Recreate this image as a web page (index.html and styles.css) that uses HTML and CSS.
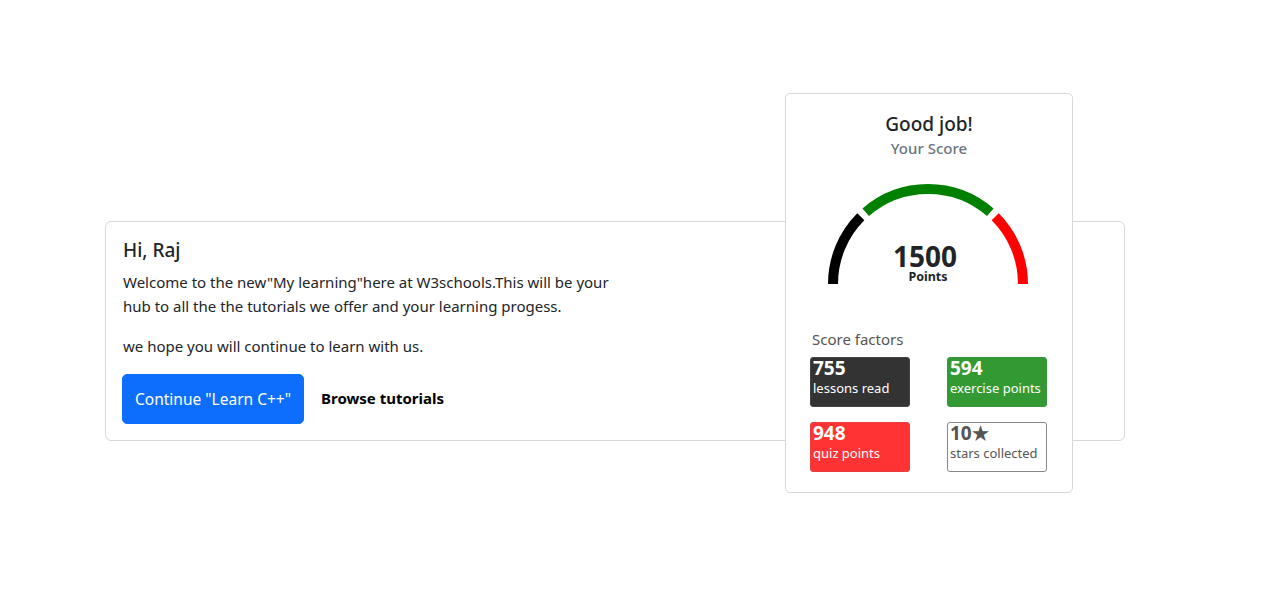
FILE: index.html
```html
<!DOCTYPE html>
<html>
<head>
<meta charset="utf-8">
<link rel="stylesheet" href="styles.css">
</head>
<body>
<div class="page">
  <div class="welcome-card">
    <div class="welcome-text">
      <h5 class="title">Hi, Raj</h5>
      <p>Welcome to the new"My learning"here at W3schools.This will be your hub to all the the tutorials we offer and your learning progess.</p>
      <p>we hope you will continue to learn with us.</p>
      <div class="actions">
        <button class="btn-primary">Continue "Learn C++"</button>
        <a class="browse">Browse tutorials</a>
      </div>
    </div>
  </div>

  <div class="score-card">
    <h5 class="score-title">Good job!</h5>
    <div class="score-sub">Your Score</div>
    <div class="gauge">
      <svg width="200" height="100" viewBox="0 0 200 100">
        <path d="M5 100 A95 95 0 0 1 32.8 32.8" fill="none" stroke="#000" stroke-width="10"/>
        <path d="M37.7 28.3 A95 95 0 0 1 162.3 28.3" fill="none" stroke="#008000" stroke-width="10"/>
        <path d="M167.2 32.8 A95 95 0 0 1 195 100" fill="none" stroke="#ff0000" stroke-width="10"/>
      </svg>
      <div class="gauge-value">
        <div class="points">1500</div>
        <div class="points-label">Points</div>
      </div>
    </div>
    <div class="factors-title">Score factors</div>
    <div class="factors">
      <div class="factor dark"><div class="num">755</div><div class="lbl">lessons read</div></div>
      <div class="factor green"><div class="num">594</div><div class="lbl">exercise points</div></div>
      <div class="factor red"><div class="num">948</div><div class="lbl">quiz points</div></div>
      <div class="factor white"><div class="num">10★</div><div class="lbl">stars collected</div></div>
    </div>
  </div>
</div>
</body>
</html>
```

FILE: styles.css
```css
* { box-sizing: border-box; }
body {
  margin: 0;
  font-family: "Noto Sans", "Open Sans", sans-serif;
  color: #212529;
  background: #fff;
}
.page {
  position: relative;
  width: 1268px;
  height: 603px;
  padding: 221px 0 0 105px;
}
.welcome-card {
  width: 1020px;
  border: 1px solid #d6d8db;
  border-radius: 6px;
  padding: 16px 16px;
}
.welcome-text { width: 500px; padding-left: 1px; }
.title {
  margin: 0 0 8px;
  font-size: 19px;
  font-weight: 500;
  line-height: 24px;
}
.welcome-text p {
  margin: 0 0 16px;
  font-size: 15px;
  line-height: 24px;
}
.actions {
  display: flex;
  align-items: center;
  gap: 17px;
}
.btn-primary {
  background: #0d6efd;
  color: #fff;
  border: 1px solid #0d6efd;
  border-radius: 5px;
  font-family: inherit;
  font-size: 15.5px;
  line-height: 24px;
  padding: 12px 4px;
  width: 182px;
  height: 50px;
  margin-left: -1px;
  white-space: nowrap;
  text-align: center;
}
.browse {
  font-weight: 700;
  font-size: 15px;
  color: #000;
  margin-top: -3px;
}
.score-card {
  position: absolute;
  left: 785px;
  top: 93px;
  width: 288px;
  height: 400px;
  background: #fff;
  border: 1px solid #d6d8db;
  border-radius: 5px;
  padding: 16px 24px 20px;
  display: flex;
  flex-direction: column;
  align-items: center;
}
.score-title {
  margin: 0;
  font-size: 19px;
  font-weight: 500;
  line-height: 28px;
}
.score-sub {
  font-size: 15px;
  color: #6c757d;
  line-height: 22px;
  margin-top: -1px;
  font-weight: 500;
}
.gauge {
  position: relative;
  width: 200px;
  height: 100px;
  margin-top: 25px;
  margin-left: -2px;
}
.gauge svg { display: block; }
.gauge-value {
  position: absolute;
  left: 0;
  right: 0;
  top: 59px;
  text-align: center;
}
.points {
  font-size: 28px;
  font-weight: 700;
  line-height: 26px;
  margin-left: -6px;
}
.points-label {
  font-size: 12.5px;
  font-weight: 700;
  line-height: 14px;
  margin-top: 1px;
}
.factors-title {
  align-self: flex-start;
  margin: 45px 0 0 2px;
  font-size: 15px;
  color: #555;
  line-height: 20px;
}
.factors {
  align-self: flex-start;
  margin-top: 8px;
  display: grid;
  grid-template-columns: 100px 100px;
  column-gap: 37px;
  row-gap: 15px;
}
.factor {
  height: 50px;
  border: 1px solid #888;
  border-radius: 3px;
  padding: 0 2px;
  color: #fff;
}
.factor .num {
  font-size: 19px;
  font-weight: 700;
  line-height: 20px;
}
.factor .lbl {
  font-size: 13px;
  line-height: 20px;
  white-space: nowrap;
}
.dark { background: #333; border-color: #444; }
.green { background: #339933; border-color: #3a963a; }
.red { background: #ff3333; border-color: #e64040; }
.white { background: #fff; color: #555; }
```
